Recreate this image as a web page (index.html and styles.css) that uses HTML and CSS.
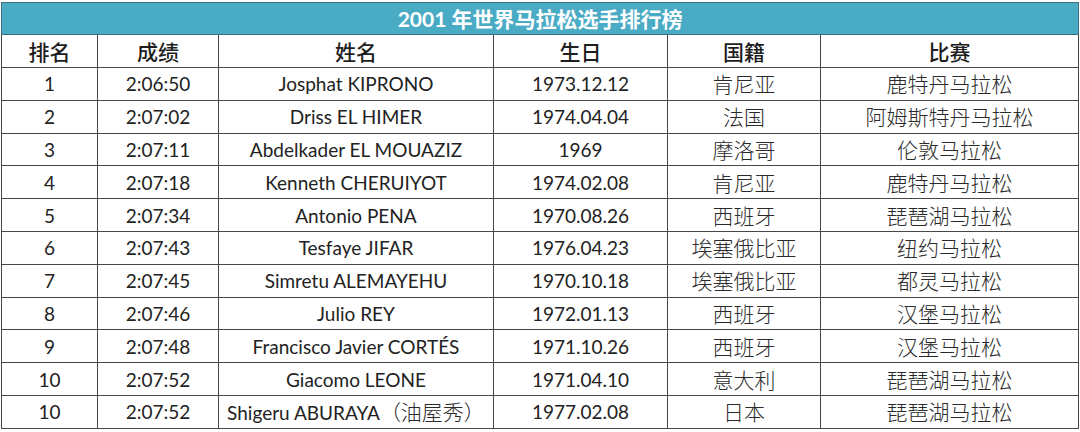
FILE: index.html
```html
<!DOCTYPE html>
<html lang="zh-CN">
<head>
<meta charset="utf-8">
<title>2001 年世界马拉松选手排行榜</title>
<link rel="stylesheet" href="styles.css">
</head>
<body>
<table class="rank">
  <colgroup>
    <col class="c-rank"><col class="c-time"><col class="c-name"><col class="c-birth"><col class="c-nat"><col class="c-race">
  </colgroup>
  <thead>
    <tr class="title-row"><th colspan="6">2001 年世界马拉松选手排行榜</th></tr>
    <tr class="head-row"><th>排名</th><th>成绩</th><th>姓名</th><th>生日</th><th>国籍</th><th>比赛</th></tr>
  </thead>
  <tbody>
    <tr><td>1</td><td>2:06:50</td><td>Josphat KIPRONO</td><td>1973.12.12</td><td class="cjk">肯尼亚</td><td class="cjk">鹿特丹马拉松</td></tr>
    <tr><td>2</td><td>2:07:02</td><td>Driss EL HIMER</td><td>1974.04.04</td><td class="cjk">法国</td><td class="cjk">阿姆斯特丹马拉松</td></tr>
    <tr><td>3</td><td>2:07:11</td><td>Abdelkader EL MOUAZIZ</td><td>1969</td><td class="cjk">摩洛哥</td><td class="cjk">伦敦马拉松</td></tr>
    <tr><td>4</td><td>2:07:18</td><td>Kenneth CHERUIYOT</td><td>1974.02.08</td><td class="cjk">肯尼亚</td><td class="cjk">鹿特丹马拉松</td></tr>
    <tr><td>5</td><td>2:07:34</td><td>Antonio PENA</td><td>1970.08.26</td><td class="cjk">西班牙</td><td class="cjk">琵琶湖马拉松</td></tr>
    <tr><td>6</td><td>2:07:43</td><td>Tesfaye JIFAR</td><td>1976.04.23</td><td class="cjk">埃塞俄比亚</td><td class="cjk">纽约马拉松</td></tr>
    <tr><td>7</td><td>2:07:45</td><td>Simretu ALEMAYEHU</td><td>1970.10.18</td><td class="cjk">埃塞俄比亚</td><td class="cjk">都灵马拉松</td></tr>
    <tr><td>8</td><td>2:07:46</td><td>Julio REY</td><td>1972.01.13</td><td class="cjk">西班牙</td><td class="cjk">汉堡马拉松</td></tr>
    <tr><td>9</td><td>2:07:48</td><td>Francisco Javier CORTÉS</td><td>1971.10.26</td><td class="cjk">西班牙</td><td class="cjk">汉堡马拉松</td></tr>
    <tr><td>10</td><td>2:07:52</td><td>Giacomo LEONE</td><td>1971.04.10</td><td class="cjk">意大利</td><td class="cjk">琵琶湖马拉松</td></tr>
    <tr><td>10</td><td>2:07:52</td><td>Shigeru ABURAYA<span class="cjk-inline">（油屋秀）</span></td><td>1977.02.08</td><td class="cjk">日本</td><td class="cjk">琵琶湖马拉松</td></tr>
  </tbody>
</table>
</body>
</html>
```

FILE: styles.css
```css
html, body {
  margin: 0;
  background: #ffffff;
}
body {
  padding: 2px 0 0 1px;
  font-family: "Lato", "Noto Sans CJK SC", sans-serif;
  color: #222222;
}
.rank {
  border-collapse: collapse;
  table-layout: fixed;
  width: 1077px;
}
.c-rank { width: 96px; }
.c-time { width: 121px; }
.c-name { width: 275px; }
.c-birth { width: 174px; }
.c-nat { width: 153px; }
.c-race { width: 258px; }
.rank th, .rank td {
  border: 1px solid #474747;
  padding: 0;
  text-align: center;
  vertical-align: middle;
  white-space: nowrap;
  overflow: hidden;
  font-size: 19px;
  line-height: 1;
}
.rank td {
  height: 31.8px;
  font-weight: 400;
}
.rank td.cjk,
.cjk-inline {
  font-family: "Noto Sans CJK SC", sans-serif;
  font-size: 21px;
  font-weight: 300;
  color: #2a2a2a;
}
.title-row th {
  height: 31px;
  background: #4aabc5;
  color: #ffffff;
  font-weight: 700;
  font-size: 21px;
  border-color: #3d6f7e;
}
.head-row th {
  height: 32px;
  font-weight: 500;
  font-size: 21px;
  color: #1e1e1e;
}
```
